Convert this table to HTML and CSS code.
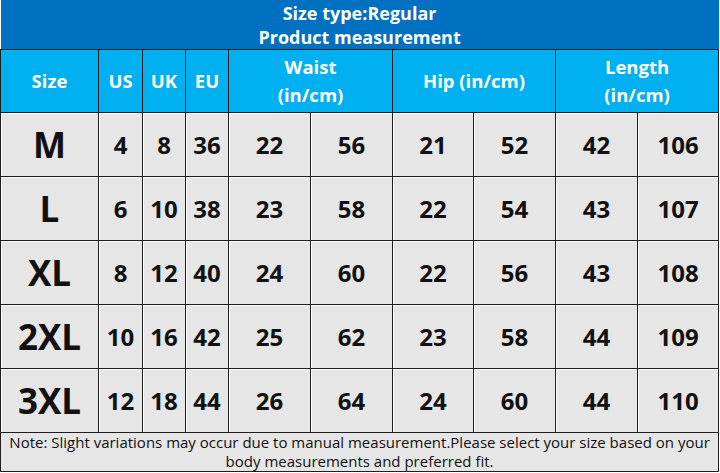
FILE: index.html
```html
<!DOCTYPE html>
<html>
<head>
<meta charset="utf-8">
<link rel="stylesheet" href="styles.css">
</head>
<body>
<table class="chart">
  <colgroup>
    <col class="c-size"><col class="c-sm"><col class="c-sm2"><col class="c-sm2">
    <col class="c-w"><col class="c-w"><col class="c-w2"><col class="c-w"><col class="c-w"><col class="c-w2">
  </colgroup>
  <tr class="title"><td colspan="10">Size type:Regular<br>Product measurement</td></tr>
  <tr class="head">
    <td>Size</td><td>US</td><td>UK</td><td>EU</td>
    <td colspan="2">Waist<br>(in/cm)</td>
    <td colspan="2">Hip (in/cm)</td>
    <td colspan="2">Length<br>(in/cm)</td>
  </tr>
  <tr class="row"><td class="sz">M</td><td>4</td><td>8</td><td>36</td><td>22</td><td>56</td><td>21</td><td>52</td><td>42</td><td>106</td></tr>
  <tr class="row"><td class="sz">L</td><td>6</td><td>10</td><td>38</td><td>23</td><td>58</td><td>22</td><td>54</td><td>43</td><td>107</td></tr>
  <tr class="row"><td class="sz">XL</td><td>8</td><td>12</td><td>40</td><td>24</td><td>60</td><td>22</td><td>56</td><td>43</td><td>108</td></tr>
  <tr class="row"><td class="sz">2XL</td><td>10</td><td>16</td><td>42</td><td>25</td><td>62</td><td>23</td><td>58</td><td>44</td><td>109</td></tr>
  <tr class="row"><td class="sz">3XL</td><td>12</td><td>18</td><td>44</td><td>26</td><td>64</td><td>24</td><td>60</td><td>44</td><td>110</td></tr>
  <tr class="note"><td colspan="10">Note: Slight variations may occur due to manual measurement.Please select your size based on your body measurements and preferred fit.</td></tr>
</table>
</body>
</html>
```
FILE: styles.css
```css
html, body { margin: 0; padding: 0; background: #fff; }
.chart {
  border-collapse: collapse;
  table-layout: fixed;
  width: 719px;
  font-family: "Open Sans", "Noto Sans", sans-serif;
  color: #111;
}
.c-size { width: 98px; }
.c-sm { width: 44px; }
.c-sm2 { width: 43px; }
.c-w { width: 82px; }
.c-w2 { width: 81px; }
.chart td {
  border: 1.5px solid #1e1e1e;
  text-align: center;
  padding: 0;
}
.title td {
  background: #0070c0;
  color: #fff;
  font-weight: 700;
  font-size: 18px;
  line-height: 24px;
  height: 49px;
  border-top: none;
  border-left: none;
  border-right: none;
}
.head td {
  background: #00b0f0;
  color: #fff;
  font-weight: 700;
  font-size: 18.5px;
  line-height: 28px;
  height: 62px;
}
.row td {
  background: #e6e6e6;
  font-weight: 700;
  font-size: 24px;
  height: 63px;
  box-shadow: inset 1px 1px 0 #fff;
}
.row td.sz { font-size: 35px; }
.note td {
  background: #e6e6e6;
  font-size: 15px;
  line-height: 19px;
  height: 38px;
  padding: 0 2px;
}
```
